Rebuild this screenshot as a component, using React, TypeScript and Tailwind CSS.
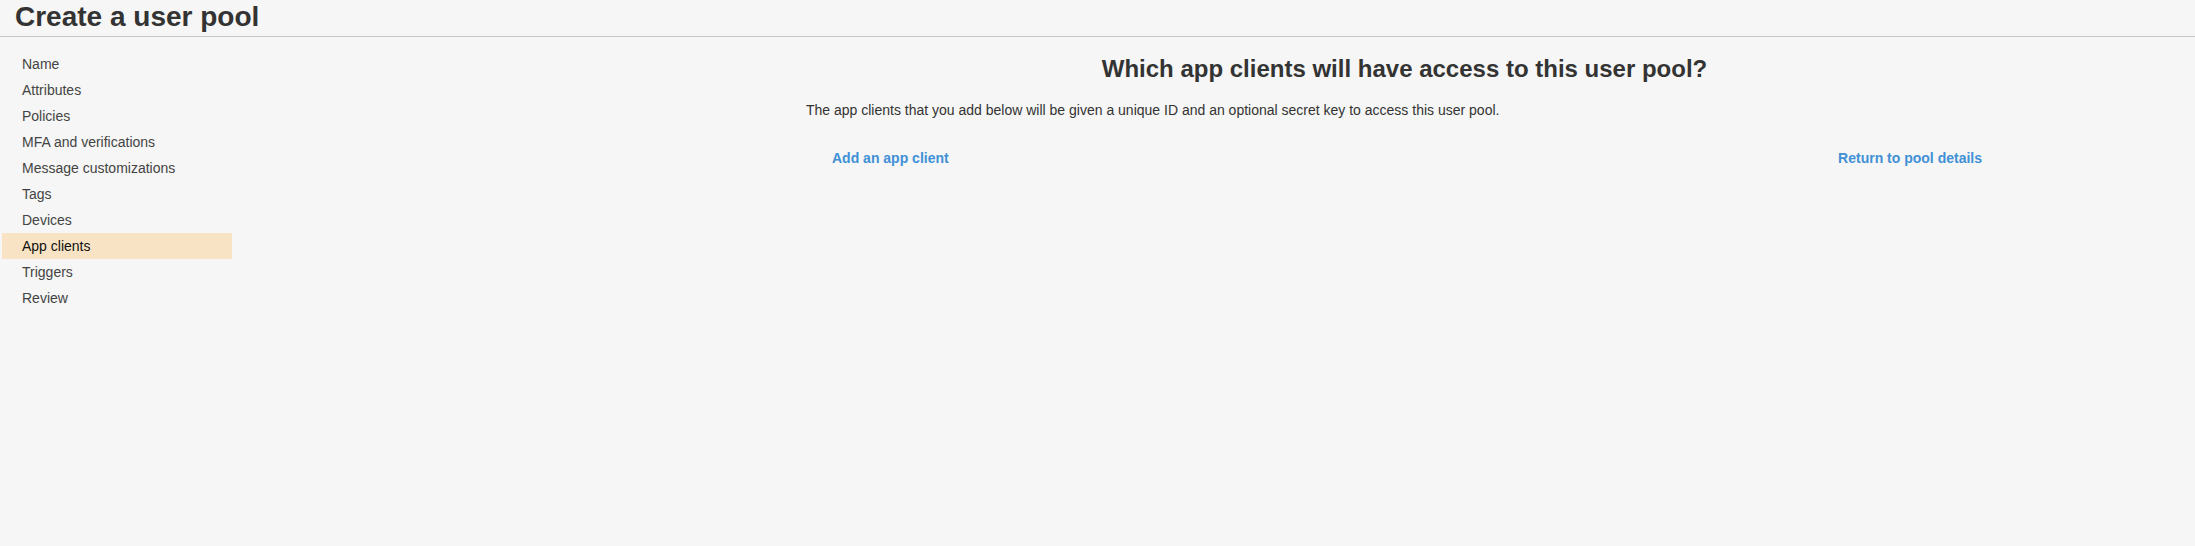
import React from "react";

const items = [
  "Name",
  "Attributes",
  "Policies",
  "MFA and verifications",
  "Message customizations",
  "Tags",
  "Devices",
  "App clients",
  "Triggers",
  "Review",
];

export default function App() {
  return (
    <div
      className="min-h-screen w-full bg-[#f5f6f5] text-[#333]"
      style={{ fontFamily: '"Liberation Sans", Arial, sans-serif' }}
    >
      <div className="border-b border-[#c8c8c8] pl-[15px] pb-[3px] pt-[1px]">
        <h1 className="text-[28px] leading-[32px] font-bold text-[#333]">Create a user pool</h1>
      </div>
      <div className="flex">
        <ul className="ml-[2px] w-[230px] pt-[14px]">
          {items.map((it) => (
            <li
              key={it}
              className={
                "h-[26px] pl-[20px] text-[14px] leading-[26px] " +
                (it === "App clients" ? "bg-[#f8e4c5] text-[#111]" : "text-[#444]")
              }
            >
              {it}
            </li>
          ))}
        </ul>
        <div className="flex-1">
          <div className="ml-[574px] w-[1197px]">
            <h2 className="pt-[18px] text-center text-[24px] leading-[28px] font-bold text-[#333]">
              Which app clients will have access to this user pool?
            </h2>
            <p className="mt-[17px] text-[14px] leading-[20px] text-[#333]">
              The app clients that you add below will be given a unique ID and an optional secret key to access this user pool.
            </p>
            <div className="mt-[28px] flex justify-between pl-[26px] pr-[21px]">
              <a className="text-[14px] leading-[20px] font-bold text-[#4190d6] cursor-pointer">Add an app client</a>
              <a className="text-[14px] leading-[20px] font-bold text-[#4190d6] cursor-pointer">Return to pool details</a>
            </div>
          </div>
        </div>
      </div>
    </div>
  );
}
